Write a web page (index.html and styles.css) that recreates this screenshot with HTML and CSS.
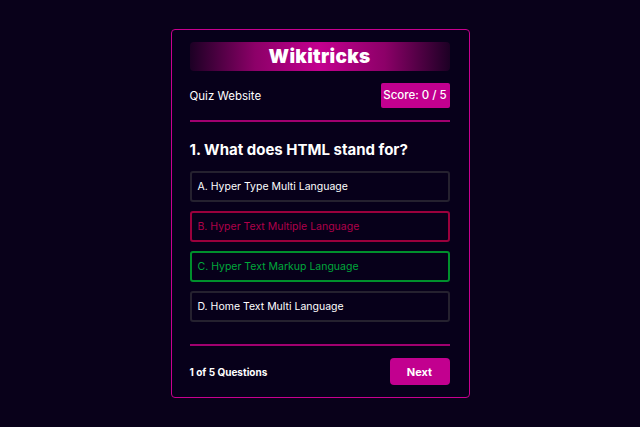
FILE: index.html
```html
<!DOCTYPE html>
<html>
<head>
<meta charset="utf-8">
<link rel="stylesheet" href="styles.css">
</head>
<body>
<div class="card">
  <div class="banner">Wikitricks</div>
  <div class="topbar">
    <span class="site">Quiz Website</span>
    <span class="score">Score: 0 / 5</span>
  </div>
  <hr class="rule">
  <h2 class="question">1. What does HTML stand for?</h2>
  <ul class="options">
    <li class="opt">A. Hyper Type Multi Language</li>
    <li class="opt wrong">B. Hyper Text Multiple Language</li>
    <li class="opt right">C. Hyper Text Markup Language</li>
    <li class="opt">D. Home Text Multi Language</li>
  </ul>
  <hr class="rule rule-bottom">
  <div class="footer">
    <span class="count">1 of 5 Questions</span>
    <button class="next">Next</button>
  </div>
</div>
</body>
</html>
```
FILE: styles.css
```css
* { box-sizing: border-box; }
html, body { margin: 0; padding: 0; }
body {
  background: #09011a;
  font-family: "Inter", "Open Sans", sans-serif;
  color: #ffffff;
  width: 640px;
  height: 427px;
  display: flex;
  justify-content: center;
  padding-top: 29px;
}
.card {
  width: 299px;
  height: 369px;
  border: 1px solid #c8008f;
  border-radius: 4px;
  background: #07001a;
  padding: 12px 19px 0 18px;
  display: flex;
  flex-direction: column;
}
.banner {
  height: 29px;
  border-radius: 4px;
  background: linear-gradient(90deg, #1c0024 0%, #8c0068 25%, #c4008f 50%, #8c0068 75%, #1c0024 100%);
  text-align: center;
  font-weight: 900;
  font-size: 19px;
  line-height: 29px;
  letter-spacing: 0.3px;
}
.topbar {
  display: flex;
  justify-content: space-between;
  align-items: center;
  margin-top: 12px;
  height: 25px;
}
.site { font-size: 11.5px; }
.score {
  width: 69px;
  text-align: center;
  background: #c2008f;
  border-radius: 2px;
  font-size: 11.5px;
  font-weight: 500;
  height: 25px;
  line-height: 25px;
}
.rule {
  border: 0;
  height: 2px;
  background: #a0006f;
  margin: 12px 0 0;
}
.question {
  margin: 18px 0 0;
  font-size: 15px;
  font-weight: 700;
  line-height: 20px;
}
.options {
  list-style: none;
  margin: 11px 0 0;
  padding: 0;
  display: flex;
  flex-direction: column;
  gap: 9px;
}
.opt {
  height: 31px;
  border: 2px solid #25212f;
  border-radius: 3px;
  padding: 0 6px;
  font-size: 10.5px;
  line-height: 27px;
  color: #ffffff;
}
.opt.wrong { border-color: #9a003c; color: #b0004a; }
.opt.right { border-color: #008f2c; color: #00a83a; }
.rule-bottom { margin-top: 22px; }
.footer {
  display: flex;
  justify-content: space-between;
  align-items: center;
  margin-top: 12px;
}
.count { font-size: 10px; font-weight: 700; }
.next {
  width: 60px;
  height: 27px;
  border: 0;
  border-radius: 4px;
  background: #c2008f;
  color: #ffffff;
  font-family: inherit;
  font-weight: 700;
  font-size: 11px;
}
```
